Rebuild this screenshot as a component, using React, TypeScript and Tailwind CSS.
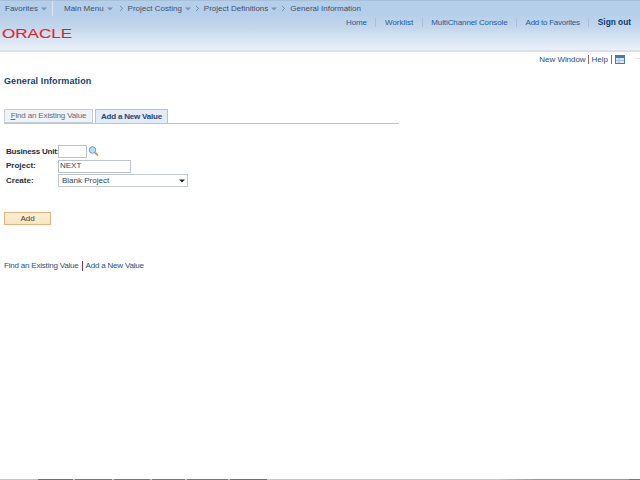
import { ChevronRight } from "lucide-react";

const Caret = () => (
  <svg width="6" height="4" viewBox="0 0 6 4" className="ml-[3px] mt-[1px]">
    <path d="M0 0.5h6L3 3.5z" fill="#7c93ad" />
  </svg>
);

const Crumb = ({ label, caret = true }: { label: string; caret?: boolean }) => (
  <div className="flex items-center">
    <ChevronRight className="w-[9px] h-[9px] ml-[2px] mr-[2px] text-[#5a7391]" strokeWidth={2} />
    <span>{label}</span>
    {caret && <Caret />}
  </div>
);

const Sep = () => <div className="w-px h-[9px] bg-[#a9bfd6]" />;

const PIPE = "w-px h-[9px] bg-[#9a6a4c]";

export default function App() {
  return (
    <div className="w-[640px] h-[480px] bg-white flex flex-col overflow-hidden font-['Liberation_Sans',Arial,sans-serif] text-[8px] leading-none">
      {/* header */}
      <div className="h-[52px] shrink-0 flex flex-col border-b-2 border-[#dcdfe8] bg-[linear-gradient(#b8d0ea_0%,#b8d0ea_30%,#c2d6ec_55%,#d6e3f3_75%,#eaf0f9_100%)]">
        <div className="h-[16px] shrink-0 flex items-center text-[#3e5068] border-t border-[#a7bfd8] bg-[#b5cfeb]">
          <div className="w-[53px] h-full flex items-center pl-[5px] border-r border-[#dbe6f3] shrink-0">
            <span>Favorites</span>
            <Caret />
          </div>
          <div className="flex items-center pl-[11px]">
            <span>Main Menu</span>
            <Caret />
            <div className="w-[2px]" />
            <Crumb label="Project Costing" />
            <Crumb label="Project Definitions" />
            <Crumb label="General Information" caret={false} />
          </div>
        </div>
        <div className="flex justify-between pt-[2px] pr-[9px]">
          <svg width="74" height="16" viewBox="0 0 74 16" className="mt-[7px] ml-[2px]">
            <text
              x="0"
              y="13"
              textLength="70"
              lengthAdjust="spacingAndGlyphs"
              fill="#e8202a"
              stroke="#e8202a"
              strokeWidth="0.12"
              fontFamily="Liberation Sans"
              fontSize="13.5"
            >
              ORACLE
            </text>
          </svg>
          <div className="flex items-center gap-[8.5px] h-[9px] text-[#1f5a92] whitespace-nowrap">
            <span className="tracking-[-0.1px]">Home</span>
            <Sep />
            <span>Worklist</span>
            <Sep />
            <span className="tracking-[-0.1px]">MultiChannel Console</span>
            <Sep />
            <span className="tracking-[-0.25px]">Add to Favorites</span>
            <Sep />
            <span className="font-bold text-[#0b3a6b] text-[8.3px]">Sign out</span>
          </div>
        </div>
      </div>

      {/* page links */}
      <div className="h-[13px] flex items-center justify-end mt-[1px] text-[#1f4f85] shrink-0">
        <span className="tracking-[-0.05px]">New Window</span>
        <div className={PIPE + " ml-[2px] mr-[3px]"} />
        <span>Help</span>
        <div className={PIPE + " mx-[3px]"} />
        <svg width="10" height="9" viewBox="0 0 10 9">
          <rect x="0.5" y="0.5" width="9" height="8" fill="#dbe6f3" stroke="#4a78b5" />
          <rect x="1" y="1" width="8" height="2" fill="#4a78b5" />
          <path d="M4 3v5M1 5.5h8" stroke="#a8c0dc" />
        </svg>
        <div className="w-[5px] h-px ml-[10px] mb-[3px] bg-[#e2e2e2]" />
      </div>

      <div className="pl-[4px] flex-1 flex flex-col min-h-0">
        <h1 className="mt-[11px] font-bold text-[9px] tracking-[0.1px] text-[#173f6d]">General Information</h1>

        {/* tabs */}
        <div className="mt-[24px] w-[395px] flex items-end gap-[2px] border-b border-[#b7c5d6] h-[14px]">
          <div className="h-[14px] w-[89px] flex items-center justify-center bg-[#f1f3f6] border border-[#c2cedb] text-[#5c6b7c] tracking-[-0.15px]">
            <span>
              <span className="underline">F</span>ind an Existing Value
            </span>
          </div>
          <div className="h-[14px] w-[73px] flex items-center justify-center bg-[#e3ebf6] border border-b-0 border-[#b3c4d9] font-bold text-[#24466f] tracking-[-0.2px]">
            Add a New Value
          </div>
        </div>

        {/* form */}
        <div className="mt-[21px] pl-[2px] flex flex-col gap-[1.5px] text-[#1d2f45]">
          <div className="flex items-center h-[13px]">
            <label className="w-[52px] font-bold whitespace-nowrap tracking-[-0.2px]">Business Unit:</label>
            <div className="w-[29px] h-[13px] bg-white border border-[#bcc3cc]" />
            <svg width="11" height="11" viewBox="0 0 11 11" className="ml-[1px]">
              <circle cx="4.5" cy="4" r="3.3" fill="#bcdcf2" stroke="#6f9fc7" strokeWidth="1" />
              <path d="M7 6.5l3 3" stroke="#c8a26a" strokeWidth="1.8" />
            </svg>
          </div>
          <div className="flex items-center h-[13px]">
            <label className="w-[52px] font-bold">Project:</label>
            <div className="w-[73px] h-[13px] bg-white border border-[#bcc3cc] pl-[1px] flex items-center text-[#33465c]">
              NEXT
            </div>
          </div>
          <div className="flex items-center h-[13px]">
            <label className="w-[52px] font-bold">Create:</label>
            <div className="w-[130px] h-[13px] bg-white border border-[#c3c9d1] pl-[3px] pr-[2px] flex items-center justify-between text-[#33465c]">
              <span>Blank Project</span>
              <svg width="6" height="4" viewBox="0 0 6 4">
                <path d="M0 0.5h6L3 3.5z" fill="#222" />
              </svg>
            </div>
          </div>
        </div>

        <button className="mt-[25px] w-[47px] h-[13px] border border-[#e3b57c] bg-[linear-gradient(#fbf0da,#f9e5c0)] text-[#3a3a3a] text-[8px]">
          Add
        </button>

        {/* bottom links */}
        <div className="mt-[36px] flex items-center text-[#1f4f85] tracking-[-0.2px]">
          <span>Find an Existing Value</span>
          <div className="w-px h-[10px] bg-[#8a3a4a] mx-[3px]" />
          <span>Add a New Value</span>
        </div>
      </div>

      {/* taskbar sliver at bottom edge */}
      <div className="h-px shrink-0 flex bg-[#b9c7d6]">
        <div className="w-[38px]" />
        <div className="w-[35px] bg-[#707070]" />
        <div className="w-[2px]" />
        <div className="w-[37px] bg-[#787878]" />
        <div className="w-[2px]" />
        <div className="w-[36px] bg-[#787878]" />
        <div className="w-[2px]" />
        <div className="w-[33px] bg-[#787878]" />
        <div className="w-[2px]" />
        <div className="w-[41px] bg-[#787878]" />
        <div className="w-[2px]" />
        <div className="w-[37px] bg-[#707070]" />
        <div className="flex-1 bg-[linear-gradient(90deg,#b9c7d6_0%,#b9c7d6_62%,#8f9aa3_72%,#8f9aa3_97%,#787878_97%)]" />
      </div>
    </div>
  );
}
